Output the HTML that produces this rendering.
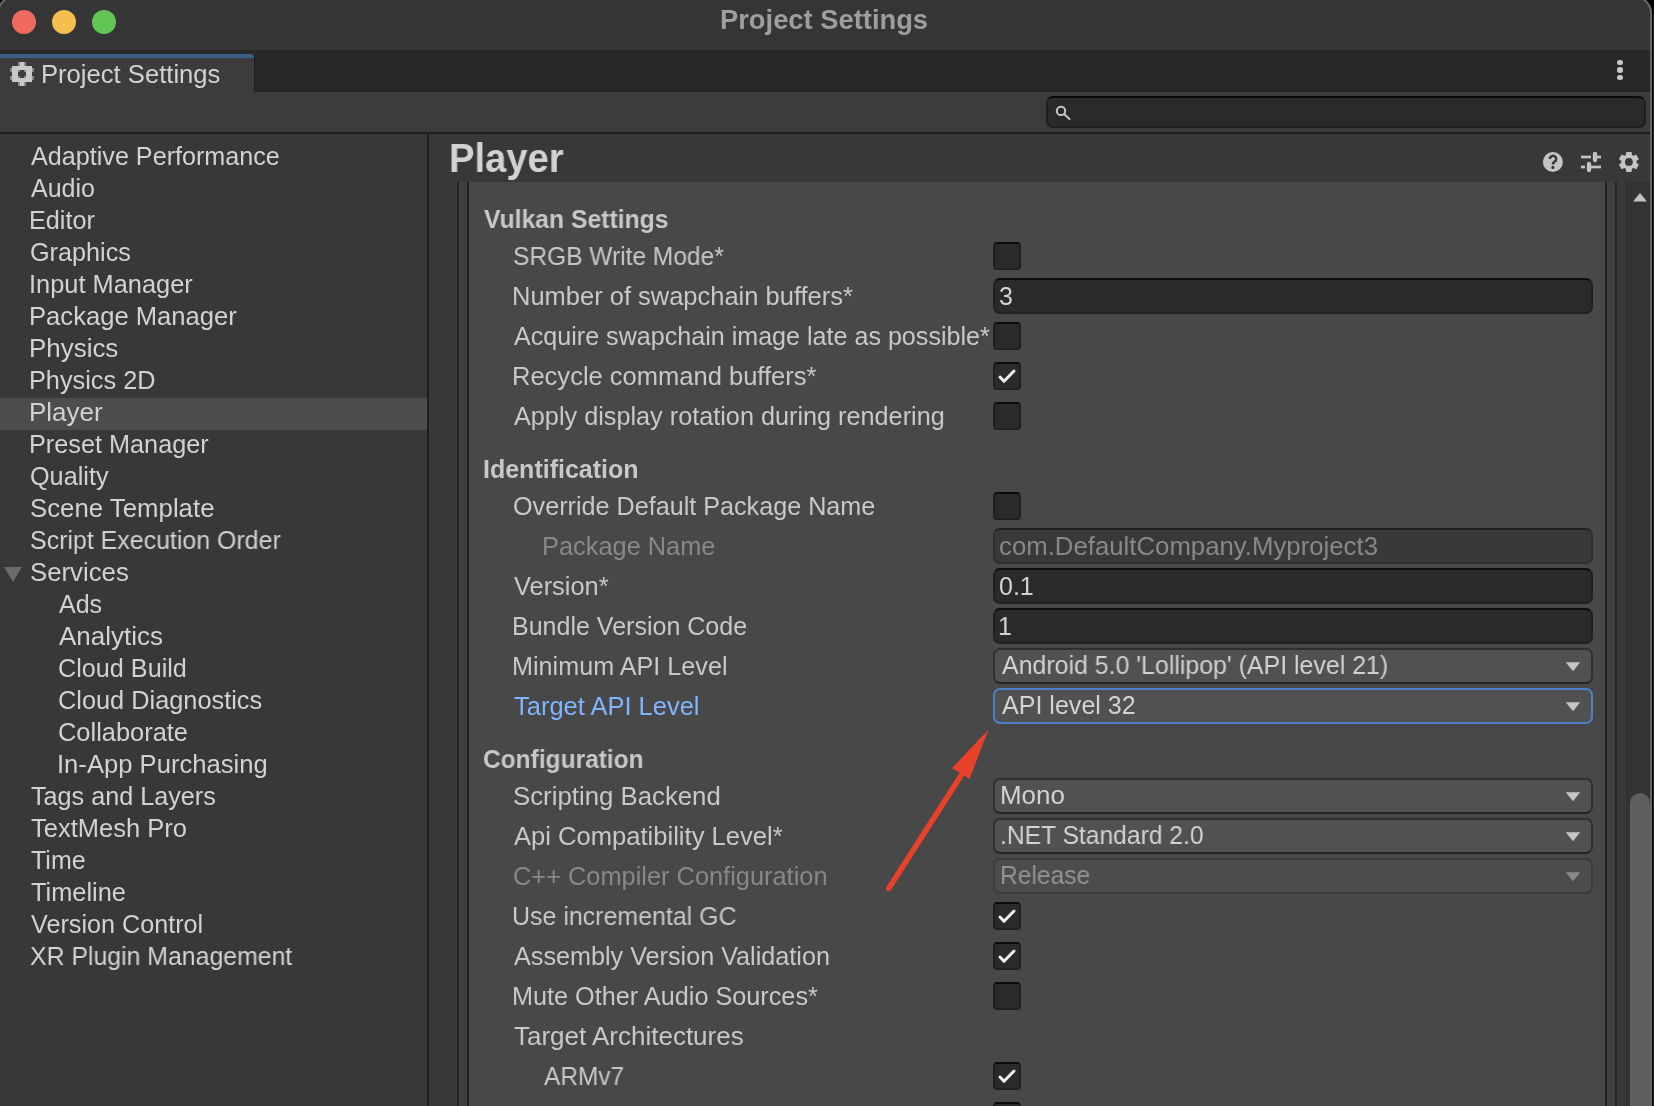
<!DOCTYPE html>
<html><head><meta charset="utf-8"><style>
html,body{margin:0;padding:0;background:#000;width:1654px;height:1106px;overflow:hidden}
body>div,body>svg{position:absolute}
.t{font-family:"Liberation Sans", sans-serif;line-height:1;white-space:nowrap;will-change:transform}
</style></head><body>
<div style="left:0px;top:0px;width:1652px;height:1106px;background:#383838;"></div>
<div style="left:0px;top:0px;width:1652px;height:50px;background:#353535;"></div>
<div style="left:12px;top:10px;width:24px;height:24px;background:#ed6a5e;border-radius:50%"></div>
<div style="left:52px;top:10px;width:24px;height:24px;background:#f5bf4f;border-radius:50%"></div>
<div style="left:92px;top:10px;width:24px;height:24px;background:#61c554;border-radius:50%"></div>
<div id="t0" class="t" style="left:719.99px;top:7.14px;font-size:27px;color:#9e9e9e;font-weight:bold;transform:scaleX(1.0123);transform-origin:0 0;">Project Settings</div>
<div style="left:0px;top:50px;width:1652px;height:42px;background:#282828;"></div>
<div style="left:0px;top:54px;width:254px;height:38px;background:#3c3c3c;border-top-right-radius:4px"></div>
<div style="left:0px;top:54px;width:254px;height:4px;background:#3b5f8b;border-top-right-radius:4px"></div>
<div style="left:254px;top:57px;width:1px;height:35px;background:#1e1e1e;"></div>
<div id="t1" class="t" style="left:41.45px;top:61.83px;font-size:25px;color:#d2d2d2;transform:scaleX(1.0244);transform-origin:0 0;">Project Settings</div>
<div style="left:1617.3px;top:59.8px;width:5.4px;height:5.4px;background:#c8c8c8;border-radius:50%"></div>
<div style="left:1617.3px;top:67.3px;width:5.4px;height:5.4px;background:#c8c8c8;border-radius:50%"></div>
<div style="left:1617.3px;top:74.8px;width:5.4px;height:5.4px;background:#c8c8c8;border-radius:50%"></div>
<div style="left:0px;top:92px;width:1652px;height:40px;background:#3c3c3c;"></div>
<div style="left:0px;top:132px;width:1652px;height:2px;background:#1f1f1f;"></div>
<div style="left:1046px;top:96px;width:600px;height:32px;background:#2a2a2a;box-sizing:border-box;border:2px solid #1e1e1e;border-top-color:#0b0b0b;border-radius:7px"></div>
<div style="left:0px;top:134px;width:427px;height:972px;background:#383838;"></div>
<div style="left:427px;top:134px;width:2px;height:972px;background:#1f1f1f;"></div>
<div style="left:0px;top:398px;width:427px;height:32px;background:#4d4d4d;"></div>
<div id="t2" class="t" style="left:30.60px;top:143.83px;font-size:25px;color:#d2d2d2;transform:scaleX(1.0061);transform-origin:0 0;">Adaptive Performance</div>
<div id="t3" class="t" style="left:30.60px;top:175.83px;font-size:25px;color:#d2d2d2;transform:scaleX(0.9937);transform-origin:0 0;">Audio</div>
<div id="t4" class="t" style="left:28.58px;top:207.83px;font-size:25px;color:#d2d2d2;transform:scaleX(1.0079);transform-origin:0 0;">Editor</div>
<div id="t5" class="t" style="left:29.59px;top:239.83px;font-size:25px;color:#d2d2d2;transform:scaleX(1.0092);transform-origin:0 0;">Graphics</div>
<div id="t6" class="t" style="left:28.56px;top:271.83px;font-size:25px;color:#d2d2d2;transform:scaleX(1.0157);transform-origin:0 0;">Input Manager</div>
<div id="t7" class="t" style="left:28.54px;top:303.83px;font-size:25px;color:#d2d2d2;transform:scaleX(1.0244);transform-origin:0 0;">Package Manager</div>
<div id="t8" class="t" style="left:28.52px;top:335.83px;font-size:25px;color:#d2d2d2;transform:scaleX(1.0369);transform-origin:0 0;">Physics</div>
<div id="t9" class="t" style="left:28.57px;top:367.83px;font-size:25px;color:#d2d2d2;transform:scaleX(1.0115);transform-origin:0 0;">Physics 2D</div>
<div id="t10" class="t" style="left:28.51px;top:399.83px;font-size:25px;color:#d2d2d2;transform:scaleX(1.0391);transform-origin:0 0;">Player</div>
<div id="t11" class="t" style="left:28.57px;top:431.83px;font-size:25px;color:#d2d2d2;transform:scaleX(1.0102);transform-origin:0 0;">Preset Manager</div>
<div id="t12" class="t" style="left:29.59px;top:463.83px;font-size:25px;color:#d2d2d2;transform:scaleX(1.0091);transform-origin:0 0;">Quality</div>
<div id="t13" class="t" style="left:29.56px;top:495.83px;font-size:25px;color:#d2d2d2;transform:scaleX(1.0316);transform-origin:0 0;">Scene Template</div>
<div id="t14" class="t" style="left:29.60px;top:527.83px;font-size:25px;color:#d2d2d2;transform:scaleX(0.9972);transform-origin:0 0;">Script Execution Order</div>
<div id="t15" class="t" style="left:29.56px;top:559.83px;font-size:25px;color:#d2d2d2;transform:scaleX(1.0309);transform-origin:0 0;">Services</div>
<div id="t16" class="t" style="left:58.60px;top:591.83px;font-size:25px;color:#d2d2d2;transform:scaleX(1.0000);transform-origin:0 0;">Ads</div>
<div id="t17" class="t" style="left:58.59px;top:623.83px;font-size:25px;color:#d2d2d2;transform:scaleX(1.0404);transform-origin:0 0;">Analytics</div>
<div id="t18" class="t" style="left:57.59px;top:655.83px;font-size:25px;color:#d2d2d2;transform:scaleX(1.0079);transform-origin:0 0;">Cloud Build</div>
<div id="t19" class="t" style="left:57.58px;top:687.83px;font-size:25px;color:#d2d2d2;transform:scaleX(1.0135);transform-origin:0 0;">Cloud Diagnostics</div>
<div id="t20" class="t" style="left:57.58px;top:719.83px;font-size:25px;color:#d2d2d2;transform:scaleX(1.0167);transform-origin:0 0;">Collaborate</div>
<div id="t21" class="t" style="left:56.54px;top:751.83px;font-size:25px;color:#d2d2d2;transform:scaleX(1.0243);transform-origin:0 0;">In-App Purchasing</div>
<div id="t22" class="t" style="left:30.60px;top:783.83px;font-size:25px;color:#d2d2d2;transform:scaleX(1.0071);transform-origin:0 0;">Tags and Layers</div>
<div id="t23" class="t" style="left:30.59px;top:815.83px;font-size:25px;color:#d2d2d2;transform:scaleX(1.0197);transform-origin:0 0;">TextMesh Pro</div>
<div id="t24" class="t" style="left:30.60px;top:847.83px;font-size:25px;color:#d2d2d2;transform:scaleX(0.9963);transform-origin:0 0;">Time</div>
<div id="t25" class="t" style="left:30.59px;top:879.83px;font-size:25px;color:#d2d2d2;transform:scaleX(1.0151);transform-origin:0 0;">Timeline</div>
<div id="t26" class="t" style="left:30.60px;top:911.83px;font-size:25px;color:#d2d2d2;transform:scaleX(1.0071);transform-origin:0 0;">Version Control</div>
<div id="t27" class="t" style="left:29.61px;top:943.83px;font-size:25px;color:#d2d2d2;transform:scaleX(0.9932);transform-origin:0 0;">XR Plugin Management</div>
<svg style="left:0;top:0" width="40" height="600"><polygon points="4,567 22,567 13,582" fill="#6a6a6a"/></svg>
<div style="left:429px;top:134px;width:1223px;height:972px;background:#383838;"></div>
<div id="t28" class="t" style="left:448.79px;top:138.13px;font-size:40px;color:#d2d2d2;font-weight:bold;transform:scaleX(0.9551);transform-origin:0 0;">Player</div>
<div style="left:457px;top:182px;width:2px;height:924px;background:#232323;"></div>
<div style="left:459px;top:182px;width:8px;height:924px;background:#3f3f3f;"></div>
<div style="left:467px;top:182px;width:2px;height:924px;background:#232323;"></div>
<div style="left:469px;top:182px;width:1136px;height:924px;background:#484848;"></div>
<div style="left:1605px;top:182px;width:2px;height:924px;background:#232323;"></div>
<div style="left:1607px;top:182px;width:8px;height:924px;background:#3f3f3f;"></div>
<div style="left:1615px;top:182px;width:2px;height:924px;background:#232323;"></div>
<div style="left:1617px;top:182px;width:9px;height:924px;background:#383838;"></div>
<div style="left:1626px;top:182px;width:24px;height:924px;background:#333333;"></div>
<div style="left:1626px;top:182px;width:1px;height:924px;background:#2e2e2e;"></div>
<svg style="left:1626px;top:182px" width="24" height="30"><polygon points="7,19.5 21,19.5 14,11" fill="#c4c4c4"/></svg>
<div style="left:1630px;top:793px;width:20px;height:313px;background:#5f5f5f;border-radius:10px 10px 0 0"></div>
<div style="left:1650px;top:0px;width:2px;height:1106px;background:#666666;"></div>
<div style="left:1653px;top:14px;width:1px;height:1092px;background:#262626;"></div>
<svg style="left:0;top:0" width="1654" height="40">
<path d="M1634,-4.5 A18,18 0 0 1 1652,13.5 L1654,13.5 L1654,-6 Z" fill="#000"/>
<path d="M1634,-3.5 A17,17 0 0 1 1651,13.5 L1651,40" stroke="#666" stroke-width="2" fill="none"/>
<path d="M15,-4.5 A18,18 0 0 0 -3,13.5 L-4,13.5 L-4,-6 Z" fill="#000"/>
<path d="M15,-3.5 A17,17 0 0 0 -2,13.5" stroke="#666" stroke-width="2" fill="none"/>
</svg>
<div id="t29" class="t" style="left:483.70px;top:206.83px;font-size:25px;color:#c8c8c8;font-weight:bold;transform:scaleX(0.9882);transform-origin:0 0;">Vulkan Settings</div>
<div id="t30" class="t" style="left:512.62px;top:243.83px;font-size:25px;color:#c8c8c8;transform:scaleX(0.9808);transform-origin:0 0;">SRGB Write Mode*</div>
<div style="left:993px;top:242px;width:28px;height:28px;background:#2a2a2a;box-sizing:border-box;border:2px solid #202020;border-top-color:#0b0b0b;border-radius:4px"></div>
<div id="t31" class="t" style="left:511.55px;top:283.83px;font-size:25px;color:#c8c8c8;transform:scaleX(1.0193);transform-origin:0 0;">Number of swapchain buffers*</div>
<div style="left:993px;top:278px;width:600px;height:36px;background:#2a2a2a;box-sizing:border-box;border:2px solid #212121;border-top-color:#0d0d0d;border-radius:7px"></div>
<div id="t32" class="t" style="left:999.30px;top:283.83px;font-size:25px;color:#d2d2d2;transform:scaleX(1.0000);transform-origin:0 0;">3</div>
<div id="t33" class="t" style="left:513.60px;top:323.83px;font-size:25px;color:#c8c8c8;transform:scaleX(1.0040);transform-origin:0 0;">Acquire swapchain image late as possible*</div>
<div style="left:993px;top:322px;width:28px;height:28px;background:#2a2a2a;box-sizing:border-box;border:2px solid #202020;border-top-color:#0b0b0b;border-radius:4px"></div>
<div id="t34" class="t" style="left:511.55px;top:363.83px;font-size:25px;color:#c8c8c8;transform:scaleX(1.0206);transform-origin:0 0;">Recycle command buffers*</div>
<div style="left:993px;top:362px;width:28px;height:28px;background:#2a2a2a;box-sizing:border-box;border:2px solid #202020;border-top-color:#0b0b0b;border-radius:4px"></div>
<svg style="left:993px;top:362px" width="28" height="28"><polyline points="7,15 11,19.3 21,9" fill="none" stroke="#eeeeee" stroke-width="3" stroke-linecap="round" stroke-linejoin="round"/></svg>
<div id="t35" class="t" style="left:513.59px;top:403.83px;font-size:25px;color:#c8c8c8;transform:scaleX(1.0096);transform-origin:0 0;">Apply display rotation during rendering</div>
<div style="left:993px;top:402px;width:28px;height:28px;background:#2a2a2a;box-sizing:border-box;border:2px solid #202020;border-top-color:#0b0b0b;border-radius:4px"></div>
<div id="t36" class="t" style="left:482.70px;top:456.83px;font-size:25px;color:#c8c8c8;font-weight:bold;transform:scaleX(0.9974);transform-origin:0 0;">Identification</div>
<div id="t37" class="t" style="left:512.59px;top:493.83px;font-size:25px;color:#c8c8c8;transform:scaleX(1.0067);transform-origin:0 0;">Override Default Package Name</div>
<div style="left:993px;top:492px;width:28px;height:28px;background:#2a2a2a;box-sizing:border-box;border:2px solid #202020;border-top-color:#0b0b0b;border-radius:4px"></div>
<div id="t38" class="t" style="left:541.56px;top:533.83px;font-size:25px;color:#888888;transform:scaleX(1.0149);transform-origin:0 0;">Package Name</div>
<div style="left:993px;top:528px;width:600px;height:36px;background:#393939;box-sizing:border-box;border:2px solid #2e2e2e;border-top-color:#202020;border-radius:7px"></div>
<div id="t39" class="t" style="left:998.97px;top:533.83px;font-size:25px;color:#888888;transform:scaleX(1.0306);transform-origin:0 0;">com.DefaultCompany.Myproject3</div>
<div id="t40" class="t" style="left:513.59px;top:573.83px;font-size:25px;color:#c8c8c8;transform:scaleX(1.0151);transform-origin:0 0;">Version*</div>
<div style="left:993px;top:568px;width:600px;height:36px;background:#2a2a2a;box-sizing:border-box;border:2px solid #212121;border-top-color:#0d0d0d;border-radius:7px"></div>
<div id="t41" class="t" style="left:999.30px;top:573.83px;font-size:25px;color:#d2d2d2;transform:scaleX(1.0000);transform-origin:0 0;">0.1</div>
<div id="t42" class="t" style="left:511.59px;top:613.83px;font-size:25px;color:#c8c8c8;transform:scaleX(1.0009);transform-origin:0 0;">Bundle Version Code</div>
<div style="left:993px;top:608px;width:600px;height:36px;background:#2a2a2a;box-sizing:border-box;border:2px solid #212121;border-top-color:#0d0d0d;border-radius:7px"></div>
<div id="t43" class="t" style="left:998.30px;top:613.83px;font-size:25px;color:#d2d2d2;transform:scaleX(1.0000);transform-origin:0 0;">1</div>
<div id="t44" class="t" style="left:511.58px;top:653.83px;font-size:25px;color:#c8c8c8;transform:scaleX(1.0071);transform-origin:0 0;">Minimum API Level</div>
<div style="left:993px;top:648px;width:600px;height:36px;background:#515151;box-sizing:border-box;border:2px solid #303030;border-bottom-color:#242424;border-radius:7px"></div>
<div id="t45" class="t" style="left:1002.00px;top:652.83px;font-size:25px;color:#d2d2d2;transform:scaleX(0.9964);transform-origin:0 0;">Android 5.0 'Lollipop' (API level 21)</div>
<svg style="left:1560px;top:656px" width="26" height="20"><polygon points="5.7,6.2 20.2,6.2 13,15.3" fill="#c4c4c4"/></svg>
<div id="t46" class="t" style="left:513.59px;top:693.83px;font-size:25px;color:#81b4ff;transform:scaleX(1.0188);transform-origin:0 0;">Target API Level</div>
<div style="left:993px;top:688px;width:600px;height:36px;background:#515151;box-sizing:border-box;border:2px solid #4a80c8;border-bottom-color:#4a80c8;border-radius:7px"></div>
<div id="t47" class="t" style="left:1002.00px;top:692.83px;font-size:25px;color:#d2d2d2;transform:scaleX(1.0023);transform-origin:0 0;">API level 32</div>
<svg style="left:1560px;top:696px" width="26" height="20"><polygon points="5.7,6.2 20.2,6.2 13,15.3" fill="#c4c4c4"/></svg>
<div id="t48" class="t" style="left:482.72px;top:746.83px;font-size:25px;color:#c8c8c8;font-weight:bold;transform:scaleX(0.9802);transform-origin:0 0;">Configuration</div>
<div id="t49" class="t" style="left:512.56px;top:783.83px;font-size:25px;color:#c8c8c8;transform:scaleX(1.0312);transform-origin:0 0;">Scripting Backend</div>
<div style="left:993px;top:778px;width:600px;height:36px;background:#515151;box-sizing:border-box;border:2px solid #303030;border-bottom-color:#242424;border-radius:7px"></div>
<div id="t50" class="t" style="left:999.93px;top:782.83px;font-size:25px;color:#d2d2d2;transform:scaleX(1.0367);transform-origin:0 0;">Mono</div>
<svg style="left:1560px;top:786px" width="26" height="20"><polygon points="5.7,6.2 20.2,6.2 13,15.3" fill="#c4c4c4"/></svg>
<div id="t51" class="t" style="left:513.59px;top:823.83px;font-size:25px;color:#c8c8c8;transform:scaleX(1.0229);transform-origin:0 0;">Api Compatibility Level*</div>
<div style="left:993px;top:818px;width:600px;height:36px;background:#515151;box-sizing:border-box;border:2px solid #303030;border-bottom-color:#242424;border-radius:7px"></div>
<div id="t52" class="t" style="left:1000.03px;top:822.83px;font-size:25px;color:#d2d2d2;transform:scaleX(0.9853);transform-origin:0 0;">.NET Standard 2.0</div>
<svg style="left:1560px;top:826px" width="26" height="20"><polygon points="5.7,6.2 20.2,6.2 13,15.3" fill="#c4c4c4"/></svg>
<div id="t53" class="t" style="left:512.58px;top:863.83px;font-size:25px;color:#888888;transform:scaleX(1.0149);transform-origin:0 0;">C++ Compiler Configuration</div>
<div style="left:993px;top:858px;width:600px;height:36px;background:#4c4c4c;box-sizing:border-box;border:2px solid #3c3c3c;border-radius:7px"></div>
<div id="t54" class="t" style="left:1000.33px;top:862.83px;font-size:25px;color:#939393;transform:scaleX(0.9831);transform-origin:0 0;">Release</div>
<svg style="left:1560px;top:866px" width="26" height="20"><polygon points="5.7,6.2 20.2,6.2 13,15.3" fill="#8a8a8a"/></svg>
<div id="t55" class="t" style="left:511.60px;top:903.83px;font-size:25px;color:#c8c8c8;transform:scaleX(0.9977);transform-origin:0 0;">Use incremental GC</div>
<div style="left:993px;top:902px;width:28px;height:28px;background:#2a2a2a;box-sizing:border-box;border:2px solid #202020;border-top-color:#0b0b0b;border-radius:4px"></div>
<svg style="left:993px;top:902px" width="28" height="28"><polyline points="7,15 11,19.3 21,9" fill="none" stroke="#eeeeee" stroke-width="3" stroke-linecap="round" stroke-linejoin="round"/></svg>
<div id="t56" class="t" style="left:513.60px;top:943.83px;font-size:25px;color:#c8c8c8;transform:scaleX(1.0074);transform-origin:0 0;">Assembly Version Validation</div>
<div style="left:993px;top:942px;width:28px;height:28px;background:#2a2a2a;box-sizing:border-box;border:2px solid #202020;border-top-color:#0b0b0b;border-radius:4px"></div>
<svg style="left:993px;top:942px" width="28" height="28"><polyline points="7,15 11,19.3 21,9" fill="none" stroke="#eeeeee" stroke-width="3" stroke-linecap="round" stroke-linejoin="round"/></svg>
<div id="t57" class="t" style="left:511.58px;top:983.83px;font-size:25px;color:#c8c8c8;transform:scaleX(1.0096);transform-origin:0 0;">Mute Other Audio Sources*</div>
<div style="left:993px;top:982px;width:28px;height:28px;background:#2a2a2a;box-sizing:border-box;border:2px solid #202020;border-top-color:#0b0b0b;border-radius:4px"></div>
<div id="t58" class="t" style="left:513.59px;top:1023.83px;font-size:25px;color:#c8c8c8;transform:scaleX(1.0395);transform-origin:0 0;">Target Architectures</div>
<div id="t59" class="t" style="left:543.60px;top:1063.83px;font-size:25px;color:#c8c8c8;transform:scaleX(0.9778);transform-origin:0 0;">ARMv7</div>
<div style="left:993px;top:1062px;width:28px;height:28px;background:#2a2a2a;box-sizing:border-box;border:2px solid #202020;border-top-color:#0b0b0b;border-radius:4px"></div>
<svg style="left:993px;top:1062px" width="28" height="28"><polyline points="7,15 11,19.3 21,9" fill="none" stroke="#eeeeee" stroke-width="3" stroke-linecap="round" stroke-linejoin="round"/></svg>
<div style="left:993px;top:1102px;width:28px;height:28px;background:#2a2a2a;box-sizing:border-box;border:2px solid #202020;border-top-color:#0b0b0b;border-radius:4px"></div>
<svg style="left:1530px;top:140px" width="120" height="44">
<circle cx="22.9" cy="22" r="10" fill="#c4c4c4"/>
<path d="M19.9,18.9 A3.15,3.1 0 1 1 24.9,21.4 C23.7,22.3 22.9,22.8 22.9,24.5" fill="none" stroke="#383838" stroke-width="2.6" stroke-linecap="butt"/><circle cx="22.9" cy="27.4" r="1.55" fill="#383838"/>
<g stroke="#c4c4c4" stroke-linecap="round">
<line x1="51" y1="17" x2="61" y2="17" stroke-width="2.7" stroke-linecap="butt"/>
<line x1="67" y1="17" x2="71" y2="17" stroke-width="2.7" stroke-linecap="butt"/>
<line x1="65" y1="14" x2="65" y2="20" stroke-width="4.3"/>
<line x1="51" y1="27" x2="55" y2="27" stroke-width="2.7" stroke-linecap="butt"/>
<line x1="61" y1="27" x2="71" y2="27" stroke-width="2.7" stroke-linecap="butt"/>
<line x1="59" y1="24" x2="59" y2="30" stroke-width="4.3"/>
</g>
</svg>
<svg style="left:0;top:0" width="1654" height="1106">
<line x1="888.7" y1="888.4" x2="962" y2="774" stroke="#e8412a" stroke-width="5.5" stroke-linecap="round"/>
<polygon points="988.5,729.4 951.8,768.3 958.7,772 969.6,778.9" fill="#e8412a"/>
</svg>
<svg style="left:1600px;top:140px" width="54" height="44"><g fill="#c4c4c4"><circle cx="28.9" cy="21.9" r="7.7"/><rect x="26" y="11.9" width="5.8" height="20" rx="0.8" transform="rotate(0 28.9 21.9)"/><rect x="26" y="11.9" width="5.8" height="20" rx="0.8" transform="rotate(60 28.9 21.9)"/><rect x="26" y="11.9" width="5.8" height="20" rx="0.8" transform="rotate(120 28.9 21.9)"/></g><circle cx="28.9" cy="21.9" r="3.9" fill="#383838"/></svg>
<svg style="left:0;top:0" width="50" height="100" shape-rendering="crispEdges"><rect x="12" y="66" width="20" height="16" fill="#c8c8c8"/><rect x="20" y="62" width="4" height="24" fill="#c8c8c8"/><rect x="18" y="62" width="2" height="4" fill="#8a8a8a"/><rect x="24" y="62" width="2" height="4" fill="#8a8a8a"/><rect x="18" y="82" width="2" height="4" fill="#8a8a8a"/><rect x="24" y="82" width="2" height="4" fill="#8a8a8a"/><rect x="10" y="68" width="2" height="4" fill="#8a8a8a"/><rect x="32" y="68" width="2" height="4" fill="#8a8a8a"/><rect x="10" y="76" width="2" height="4" fill="#8a8a8a"/><rect x="32" y="76" width="2" height="4" fill="#8a8a8a"/><rect x="18" y="70" width="8" height="8" fill="#3c3c3c"/><rect x="18" y="70" width="2" height="2" fill="#8a8a8a"/><rect x="24" y="70" width="2" height="2" fill="#8a8a8a"/><rect x="18" y="76" width="2" height="2" fill="#8a8a8a"/><rect x="24" y="76" width="2" height="2" fill="#8a8a8a"/></svg>
<svg style="left:1046px;top:96px" width="40" height="32">
<circle cx="15" cy="14.9" r="4.2" fill="none" stroke="#c8c8c8" stroke-width="2"/>
<line x1="18" y1="18" x2="23.5" y2="23" stroke="#c8c8c8" stroke-width="2" stroke-linecap="round"/>
</svg>
</body></html>
